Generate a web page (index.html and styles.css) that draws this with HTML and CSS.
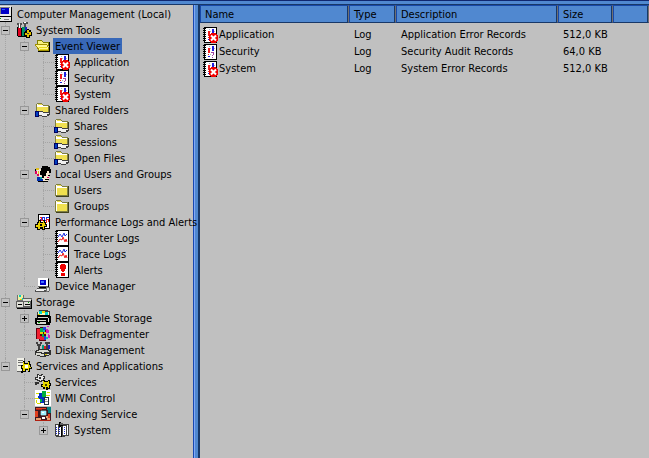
FILE: index.html
```html
<!DOCTYPE html>
<html lang="en">
<head>
    <meta charset="UTF-8">
    <meta name="viewport" content="width=device-width, initial-scale=1.0">
    <title>Computer Management</title>
    <link rel="stylesheet" href="styles.css">
</head>
<body>
    <!-- icon set -->
    <svg class="sprites" aria-hidden="true">
        <symbol id="computer" viewBox="0 0 16 16">
            <path fill="#e8e8e8" d="M2 0h12v10H2zM0 11h14v4H0z"/>
            <path fill="#000" d="M14 1h1v10h-1zM3 10h12v1H3zM14 11h1v4h-1zM0 15h15v1H0z"/>
            <path fill="#808080" d="M3 1h10v1H3zM3 2h1v6H3zM7 13h5v1H7z"/>
            <path fill="#0000c8" d="M4 2h8v6H4z"/>
            <path fill="#3060ff" d="M5 3h3v1H5z"/>
            <path fill="#00a000" d="M2 12h2v1H2z"/>
        </symbol>
        <symbol id="tools" viewBox="0 0 16 16">
            <path fill="#505050" d="M1 1h2v2H1zM4 1h2v2H4zM2 3h3v3H2zM7 0h5v2H7zM8 2h2v5H8z"/>
            <path fill="#fff" d="M3 2h1v4H3zM8 0h2v1H8z"/>
            <path fill="#000" d="M1 5h1v9H1zM5 6h1v9H5zM9 7h1v8H9zM2 14h8v1H2z"/>
            <path fill="#e00020" d="M2 6h3v8H2z"/>
            <path fill="#009060" d="M6 5h3v9H6z"/>
            <path fill="#2020c0" d="M9 5h2v4H9z"/>
            <path fill="#000" d="M11 7h2v1h2v2h1v4h-2v2h-4v-2H8v-4h2V8h1z"/>
            <path fill="#e0c000" d="M11 8h2v2h2v3h-2v2h-2v-2H9v-2h2z"/>
            <path fill="#404040" d="M11 11h2v1h-2z"/>
        </symbol>
        <symbol id="folder-open" viewBox="0 0 16 16">
            <path fill="#808000" d="M2 2h5v1h1v1h6v4H2z"/>
            <path fill="#f8f080" d="M3 3h4v1h1v1h5v3H3z"/>
            <path fill="#000" d="M14 4h1v10H3v-1h11z"/>
            <path fill="#a09000" d="M0 6h12v1h1v2h1v4H3v-2H2V9H1V8H0z"/>
            <path fill="#fff890" d="M1 7h11v2h1v3H4v-2H3V9H2V8H1z"/>
            <path fill="#e8d820" d="M4 9h8v1H4zM5 11h8v1H5z"/>
        </symbol>
        <symbol id="folder" viewBox="0 0 16 16">
            <path fill="#404020" d="M14 4h1v11H2v-1h12z"/>
            <path fill="#808040" d="M2 2h5v1h1v1h6v10H1V3h1z"/>
            <path fill="#fff" d="M2 3h5v1h1v1h5v1H3v7H2z"/>
            <path fill="#f0e050" d="M3 3h4v1H3zM3 6h10v7H3z"/>
        </symbol>
        <symbol id="page" viewBox="0 0 16 16">
            <path fill="#000" d="M2 0h13v16H2z"/>
            <path fill="#fff" d="M3 1h11v14H3z"/>
            <path fill="#000" d="M1 1h3v1H1zM1 3h3v1H1zM1 5h3v1H1zM1 7h3v1H1zM1 9h3v1H1zM1 11h3v1H1zM1 13h3v1H1z"/>
        </symbol>
        <symbol id="log" viewBox="0 0 16 16">
            <use href="#page"/>
            <path fill="#f02020" d="M6 4h2v5H6zM6 10h1v1H6z"/>
            <path fill="#2020e0" d="M10 2h2v5h-2zM6 12h2v1H6z"/>
            <path fill="#a040a0" d="M9 8h3v1H9zM11 9h1v2h-1zM10 11h1v1h-1zM10 13h1v1h-1z"/>
            <path fill="#b0b0c0" d="M7 2h1v1H7zM8 4h1v1H8zM12 4h1v1h-1zM8 10h1v1H8z"/>
        </symbol>
        <symbol id="log-error" viewBox="0 0 16 16">
            <use href="#log"/>
            <path fill="#f00000" d="M9 6h5v1h1v1h1v6h-1v1h-1v1H9v-1H8v-1H7V8h1V7h1z"/>
            <path fill="none" stroke="#fff" stroke-width="2" shape-rendering="auto" d="M9 8.500l5 5M14 8.500l-5 5"/>
        </symbol>
        <symbol id="share" viewBox="0 0 16 16">
            <path fill="#404020" d="M14 4h1v8h-1z"/>
            <path fill="#808040" d="M2 1h5v1h1v1h6v9H1V2h1z"/>
            <path fill="#fff" d="M2 2h5v1h1v1h5v1H2z"/>
            <path fill="#f0e050" d="M3 2h4v1H3zM2 5h11v6H2z"/>
            <path fill="#000060" d="M0 9h4v6H0z"/>
            <path fill="#0040c0" d="M1 10h2v4H1z"/>
            <path fill="#404040" d="M4 9h4v1h7v3h-1v1h-2v1H7v-1H4z"/>
            <path fill="#f0f0f0" d="M4 10h4v1h6v1h-2v2H7v-1H4z"/>
        </symbol>
        <symbol id="users" viewBox="0 0 16 16">
            <path fill="#f8e8d0" d="M2 3h4v7H2zM8 5h6v8H8zM4 10h9v5H4z"/>
            <path fill="#000" d="M7 0h6v1h2v2h1v4h-2V5h-2v2h-1v3H9v2H7V9H5V5h1V2h1zM1 2h3v1H1zM0 3h1v2H0zM13 9h2v1h-2zM10 13h4v1h-4zM3 15h10v1H3z"/>
            <path fill="#e00060" d="M0 5h2v3H0zM2 8h2v2H2zM12 11h2v1h-2z"/>
            <path fill="#e0c020" d="M1 2h3v2H1zM3 5h1v3H3z"/>
            <path fill="#0030b0" d="M2 11h3v4H2zM5 13h3v2H5z"/>
            <path fill="#00a0a0" d="M5 11h2v2H5z"/>
        </symbol>
        <symbol id="performance" viewBox="0 0 16 16">
            <path fill="#000" d="M3 0h12v15H3z"/>
            <path fill="#fff" d="M4 1h10v13H4z"/>
            <path fill="none" stroke="#2030e0" d="M5 5.500h2v-2h2v3h2v-3h2v-1"/>
            <path fill="none" stroke="#f02020" d="M5 3.500h1v3h3v2h2v-3h2v2"/>
            <path fill="#000" d="M4 6h2v2h2V6h2v2h1v2h1v3h-2v3H7v-1H5v1H2v-2H0v-4h2V8h2z"/>
            <path fill="#e8d000" d="M4 7h1v2h3V7h1v2h1v2h1v1H9v3H8v-2H5v2H3v-2H1v-2h2V9h1z"/>
            <path fill="#000" d="M5 10h2v2H5z"/>
        </symbol>
        <symbol id="counter" viewBox="0 0 16 16">
            <use href="#page"/>
            <path fill="none" stroke="#2030e0" shape-rendering="auto" d="M4 7l2-3 2 3 2-4 1 3 2-2"/>
            <path fill="none" stroke="#f02020" shape-rendering="auto" d="M4 12l2-3 2 1 1-3 2 5 1-3 1 3"/>
        </symbol>
        <symbol id="alert" viewBox="0 0 16 16">
            <use href="#page"/>
            <path fill="#f00000" d="M7 2h4v1h1v4h-1v2h-1v1H8V9H7V7H6V3h1zM7 11h4v3H7z"/>
        </symbol>
        <symbol id="device" viewBox="0 0 16 16">
            <path fill="#606060" d="M3 0h11v9H3z"/>
            <path fill="#fff" d="M3 0h10v8H3z"/>
            <path fill="#0000c8" d="M5 2h6v5H5z"/>
            <path fill="#4070ff" d="M6 3h3v2H6z"/>
            <path fill="#000" d="M13 1h1v9H4V9h9z"/>
            <path fill="#505050" d="M2 10h10v1h2v3H0v-2h2z"/>
            <path fill="#f0f0f0" d="M2 11h9v1H2zM1 12h8v1H1z"/>
            <path fill="#707070" d="M11 9h4v4h-2v1h-2z"/>
            <path fill="#e0e0e0" d="M12 10h2v3h-2z"/>
        </symbol>
        <symbol id="storage" viewBox="0 0 16 16">
            <path fill="#707070" d="M1 1h7v6H1z"/>
            <path fill="#f0f0a0" d="M2 1h5v5H2z"/>
            <path fill="#00d0c0" d="M3 1h2v2H3zM6 4h2v2H6z"/>
            <path fill="#e0c000" d="M4 5h2v1H4z"/>
            <path fill="#606060" d="M0 7h7V4h9v10H0z"/>
            <path fill="#e0e0d8" d="M1 8h6v5H1zM7 5h8v2H7zM8 8h6v4H8z"/>
            <path fill="#000" d="M15 6h1v9H1v-1h14zM9 10h5v1H9zM2 10h4v1H2z"/>
            <path fill="#00a000" d="M12 8h1v1h-1z"/>
        </symbol>
        <symbol id="removable" viewBox="0 0 16 16">
            <path fill="#404040" d="M4 0h9v1h2v5H2V2h2z"/>
            <path fill="#f8f8c0" d="M3 2h11v3H3z"/>
            <path fill="#00d8d0" d="M4 1h3v3H4zM10 2h3v3h-3z"/>
            <path fill="#f0d800" d="M7 1h3v2H7zM3 4h2v1H3z"/>
            <path fill="#000" d="M2 5h13v1h1v7h-1v2H1v-1H0V8h2z"/>
            <path fill="#d8d8d0" d="M3 7h10v1H3zM2 10h9v1H2zM2 12h9v2H2zM13 8h1v4h-1z"/>
            <path fill="#00a000" d="M3 12h2v1H3z"/>
        </symbol>
        <symbol id="defrag" viewBox="0 0 16 16">
            <path fill="#600010" d="M1 2h4V1h6v14H4v-2H1z"/>
            <path fill="#f02030" d="M2 3h3v10H2zM5 10h4v4H5z"/>
            <path fill="#00b050" d="M5 2h3v4H5zM7 8h2v3H7z"/>
            <path fill="#2040e0" d="M8 1h3v3H8zM9 10h2v4H9z"/>
            <path fill="#d020c0" d="M11 3h2v1h1v3h-3zM13 8h1v1h1v3h-2zM12 0h2v1h-2z"/>
            <path fill="#e8d000" d="M5 6h3v2H5zM9 6h2v2H9z"/>
            <path fill="#00c0c0" d="M8 4h2v2H8zM11 11h2v2h-2z"/>
        </symbol>
        <symbol id="disk" viewBox="0 0 16 16">
            <path fill="#404040" d="M1 0h2v2h2V0h2v2H6v2H5v3H3V4H2V2H1zM10 0h5v2h-2v5h-2V2h-1z"/>
            <path fill="#00a080" d="M7 3h2v4H7z"/>
            <path fill="#e02020" d="M9 4h2v3H9z"/>
            <path fill="#2020c0" d="M13 3h2v4h-2z"/>
            <path fill="#303030" d="M3 7h11v1h2v5h-2v1h-3v1H5v-1H2v-1H0V9h1V8h2z"/>
            <path fill="#d8d8d0" d="M4 8h9v1h1v1H9v1H7v-1H2V9h2zM1 11h5v1h3v2H5v-1H1zM10 12h4v1h-4z"/>
            <path fill="#e0d000" d="M10 12h2v1h-2z"/>
        </symbol>
        <symbol id="services-apps" viewBox="0 0 16 16">
            <path fill="#606060" d="M1 0h8v14H1z"/>
            <path fill="#f0f0e8" d="M1 0h7v13H1z"/>
            <path fill="#707070" d="M2 2h5v1H2zM2 4h5v1H2zM2 7h4v1H2z"/>
            <path fill="#000" d="M7 3h2v2h3V3h2v3h1v3h1v2h-2v3h-2v-2h-2v2H7v1H5v-2h1v-2H5V7h2z"/>
            <path fill="#e8d800" d="M7 4h1v2h4V4h1v3h1v2h1v1h-2v3h-1v-2H9v2H7v-3H6V8h1z"/>
            <path fill="#fff" d="M9 7h3v3H9z"/>
        </symbol>
        <symbol id="services" viewBox="0 0 16 16">
            <path fill="#303030" d="M2 0h2v1h2V0h2v2h2v3H9v2H7v1H4V7H2V6H0V3h2z"/>
            <path fill="#e8e8e8" d="M3 1h1v1h3V1h1v2h1v1H8v2H6v1H5V6H3V5H1V4h2z"/>
            <path fill="#303030" d="M4 3h2v2H4zM0 8h4v2H2v1H0z"/>
            <path fill="#000" d="M8 6h2v1h3V6h2v3h1v3h-1v3h-2v1h-2v-1H8v-2H6v-3h2z"/>
            <path fill="#e8d800" d="M8 7h1v1h4V7h1v3h1v1h-1v3h-1v-1h-2v2h-1v-2H8v-1H7v-1h1z"/>
            <path fill="#404000" d="M10 10h2v2h-2z"/>
        </symbol>
        <symbol id="wmi" viewBox="0 0 16 16">
            <path fill="#fff" d="M0 0h16v16H0z"/>
            <path fill="#0030c0" d="M4 3h4v3H4zM3 6h6v3H3zM5 9h4v4H5z"/>
            <path fill="#00b040" d="M7 1h4v6H7zM5 9h2v3H5zM9 8h2v4H9z"/>
            <path fill="none" stroke="#d8e000" d="M1 3.500h3M12 2.500h3M0 8.500h4M11 5.500h4M2 13.500h4M1.500 10v3"/>
            <path fill="#203040" d="M9 7h5v8H9z"/>
            <path fill="#fff" d="M10 8h3v6h-3z"/>
            <path fill="#909090" d="M10 9h2v1h-2zM10 11h3v1h-3z"/>
        </symbol>
        <symbol id="indexing" viewBox="0 0 16 16">
            <path fill="#401820" d="M0 1h16v14H0z"/>
            <path fill="#e04020" d="M1 2h10v1H1zM0 5h3v6H0zM13 8h2v4h-2z"/>
            <path fill="#008080" d="M12 1h4v3h-4zM13 4h3v3h-3z"/>
            <path fill="#b02010" d="M1 3h6v1H1zM0 14h16v1H0z"/>
            <path fill="#606060" d="M6 4h5v1h1v4h-1v1H6V9H5V5h1z"/>
            <path fill="#a0f0ff" d="M6 5h5v4H6z"/>
            <path fill="#e8a070" d="M1 12h5v2H1zM11 10h2v2h-2zM12 12h3v2h-3z"/>
            <path fill="#fff" d="M7 6h2v1H7zM7 11h3v2H7z"/>
        </symbol>
        <symbol id="catalog" viewBox="0 0 16 16">
            <path fill="#404040" d="M1 2h4v1h2v1h2V2h6v12h-4v1H2v-1H1z"/>
            <path fill="#fff" d="M2 3h2v10H2zM5 4h2v10H5zM9 4h3v9H9zM13 3h1v10h-1z"/>
            <path fill="none" stroke="#2030d0" stroke-dasharray="1 1" d="M2.500 5v8M5.500 5v8M10.500 5v8"/>
            <path fill="#000" d="M5 0h2v2h2v2H7v1H5zM7 5h1v10H7z"/>
            <path fill="#606060" d="M6 1h3v2H6z"/>
        </symbol>
    </svg>

    <div class="frame-edge"></div>
    <div class="console">
        <nav class="tree-pane" aria-label="Console tree">
            <div class="row root"><svg class="icon"><use href="#computer"/></svg><span class="label">Computer Management (Local)</span></div>
            <ul class="tree">
                <li>
                    <div class="row"><button class="toggle" aria-label="Collapse"></button><svg class="icon"><use href="#tools"/></svg><span class="label">System Tools</span></div>
                    <ul>
                        <li>
                            <div class="row"><button class="toggle" aria-label="Collapse"></button><svg class="icon"><use href="#folder-open"/></svg><span class="label selected">Event Viewer</span></div>
                            <ul>
                                <li><div class="row leaf"><svg class="icon"><use href="#log-error"/></svg><span class="label">Application</span></div></li>
                                <li><div class="row leaf"><svg class="icon"><use href="#log"/></svg><span class="label">Security</span></div></li>
                                <li><div class="row leaf"><svg class="icon"><use href="#log-error"/></svg><span class="label">System</span></div></li>
                            </ul>
                        </li>
                        <li>
                            <div class="row"><button class="toggle" aria-label="Collapse"></button><svg class="icon"><use href="#share"/></svg><span class="label">Shared Folders</span></div>
                            <ul>
                                <li><div class="row leaf"><svg class="icon"><use href="#share"/></svg><span class="label">Shares</span></div></li>
                                <li><div class="row leaf"><svg class="icon"><use href="#share"/></svg><span class="label">Sessions</span></div></li>
                                <li><div class="row leaf"><svg class="icon"><use href="#share"/></svg><span class="label">Open Files</span></div></li>
                            </ul>
                        </li>
                        <li>
                            <div class="row"><button class="toggle" aria-label="Collapse"></button><svg class="icon"><use href="#users"/></svg><span class="label">Local Users and Groups</span></div>
                            <ul>
                                <li><div class="row leaf"><svg class="icon"><use href="#folder"/></svg><span class="label">Users</span></div></li>
                                <li><div class="row leaf"><svg class="icon"><use href="#folder"/></svg><span class="label">Groups</span></div></li>
                            </ul>
                        </li>
                        <li>
                            <div class="row"><button class="toggle" aria-label="Collapse"></button><svg class="icon"><use href="#performance"/></svg><span class="label">Performance Logs and Alerts</span></div>
                            <ul>
                                <li><div class="row leaf"><svg class="icon"><use href="#counter"/></svg><span class="label">Counter Logs</span></div></li>
                                <li><div class="row leaf"><svg class="icon"><use href="#counter"/></svg><span class="label">Trace Logs</span></div></li>
                                <li><div class="row leaf"><svg class="icon"><use href="#alert"/></svg><span class="label">Alerts</span></div></li>
                            </ul>
                        </li>
                        <li><div class="row leaf"><svg class="icon"><use href="#device"/></svg><span class="label">Device Manager</span></div></li>
                    </ul>
                </li>
                <li>
                    <div class="row"><button class="toggle" aria-label="Collapse"></button><svg class="icon"><use href="#storage"/></svg><span class="label">Storage</span></div>
                    <ul>
                        <li><div class="row"><button class="toggle closed" aria-label="Expand"></button><svg class="icon"><use href="#removable"/></svg><span class="label">Removable Storage</span></div></li>
                        <li><div class="row leaf"><svg class="icon"><use href="#defrag"/></svg><span class="label">Disk Defragmenter</span></div></li>
                        <li><div class="row leaf"><svg class="icon"><use href="#disk"/></svg><span class="label">Disk Management</span></div></li>
                    </ul>
                </li>
                <li>
                    <div class="row"><button class="toggle" aria-label="Collapse"></button><svg class="icon"><use href="#services-apps"/></svg><span class="label">Services and Applications</span></div>
                    <ul>
                        <li><div class="row leaf"><svg class="icon"><use href="#services"/></svg><span class="label">Services</span></div></li>
                        <li><div class="row leaf"><svg class="icon"><use href="#wmi"/></svg><span class="label">WMI Control</span></div></li>
                        <li>
                            <div class="row"><button class="toggle" aria-label="Collapse"></button><svg class="icon"><use href="#indexing"/></svg><span class="label">Indexing Service</span></div>
                            <ul>
                                <li><div class="row"><button class="toggle closed" aria-label="Expand"></button><svg class="icon"><use href="#catalog"/></svg><span class="label">System</span></div></li>
                            </ul>
                        </li>
                    </ul>
                </li>
            </ul>
        </nav>

        <div class="splitter"></div>

        <main class="list-pane">
            <table>
                <colgroup>
                    <col class="col-name">
                    <col class="col-type">
                    <col class="col-desc">
                    <col class="col-size">
                    <col>
                </colgroup>
                <thead>
                    <tr><th>Name</th><th>Type</th><th>Description</th><th>Size</th><th></th></tr>
                </thead>
                <tbody>
                    <tr><td><div class="entry"><svg class="icon"><use href="#log-error"/></svg>Application</div></td><td>Log</td><td>Application Error Records</td><td>512,0 KB</td><td></td></tr>
                    <tr><td><div class="entry"><svg class="icon"><use href="#log"/></svg>Security</div></td><td>Log</td><td>Security Audit Records</td><td>64,0 KB</td><td></td></tr>
                    <tr><td><div class="entry"><svg class="icon"><use href="#log-error"/></svg>System</div></td><td>Log</td><td>System Error Records</td><td>512,0 KB</td><td></td></tr>
                </tbody>
            </table>
        </main>
    </div>
</body>
</html>
```
FILE: styles.css
```css
* {
    box-sizing: border-box;
}
body {
    display: flex;
    flex-direction: column;
    min-height: 100vh;
    margin: 0;
    background: #c0c0c0;
    color: #000;
    font-family: Tahoma, "DejaVu Sans Condensed", "DejaVu Sans", sans-serif;
    font-size: 11px;
    line-height: 16px;
}
ul {
    list-style: none;
    margin: 0;
    padding: 0;
}
.sprites {
    display: none;
}
.icon {
    flex: none;
    width: 16px;
    height: 16px;
    shape-rendering: crispEdges;
}

/* window frame */
.frame-edge {
    height: 5px;
    border-top: 1px solid #102870;
    border-bottom: 1px solid #183868;
    background: #5088d0;
}
.console {
    flex: 1;
    display: grid;
    grid-template-columns: 193px 7px 1fr;
}
.splitter {
    border-left: 1px solid #1848b0;
    border-right: 2px solid #183868;
    background: linear-gradient(to right, #80a8f8 1px, #5088d0 1px);
}

/* tree, long labels run over the splitter */
.tree-pane {
    z-index: 1;
    padding-top: 1px;
}
.tree, .root {
    margin-left: -3px;
}
.tree ul {
    padding-left: 19px;
}
.row {
    display: flex;
    align-items: center;
    height: 16px;
    white-space: nowrap;
}
.label {
    flex: none;
    margin-left: 2px;
    padding: 2px 2px 0;
    line-height: 14px;
}
.selected {
    background: #3868b8;
}
.tree li {
    position: relative;
}
.tree li::before {
    content: "";
    position: absolute;
    left: 8px;
    top: 0;
    bottom: 0;
    border-left: 1px dotted #a4a4a4;
}
.tree li:last-child::before {
    bottom: auto;
    height: 8px;
}
.leaf::before {
    content: "";
    flex: none;
    width: 11px;
    margin-left: 8px;
    border-top: 1px dotted #a4a4a4;
}
.toggle {
    position: relative;
    flex: none;
    width: 9px;
    height: 9px;
    margin: 0 6px 0 4px;
    padding: 0;
    border: 1px solid #989898;
    background: linear-gradient(#000, #000) center / 5px 1px no-repeat #c0c0c0;
}
.closed {
    background: linear-gradient(#000, #000) center / 5px 1px no-repeat, linear-gradient(#000, #000) center / 1px 5px no-repeat #c0c0c0;
}

/* list */
.list-pane {
    overflow: hidden;
}
table {
    width: 100%;
    table-layout: fixed;
    border-collapse: separate;
    border-spacing: 0;
}
.col-name {
    width: 149px;
}
.col-type {
    width: 47px;
}
.col-desc {
    width: 162px;
}
.col-size {
    width: 55px;
}
th {
    height: 18px;
    padding: 2px 4px 0;
    border: 1px solid #1848a8;
    border-right: 1px solid #707070;
    border-bottom-color: #183868;
    box-shadow: inset -1px 0 #183868;
    background: #5088d0;
    font-weight: normal;
    line-height: 14px;
    text-align: left;
}
td {
    height: 17px;
    padding: 0 5px;
    white-space: nowrap;
}
td:first-child {
    padding: 0 2px;
}
tbody::before {
    content: "";
    display: block;
    height: 3px;
}
.entry {
    display: flex;
    align-items: center;
    gap: 1px;
}
```
